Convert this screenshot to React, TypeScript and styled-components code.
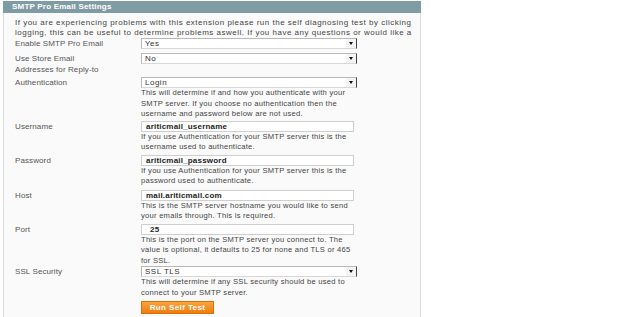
import React from "react";
import styled, { createGlobalStyle } from "styled-components";

const Global = createGlobalStyle`
  html, body { margin: 0; padding: 0; background: #ffffff; }
  body { font-family: "Liberation Sans", Arial, sans-serif; }
`;

const Panel = styled.div`
  width: 418px;
  margin: 1px 0 0 3px;
  overflow: hidden;
`;

const Header = styled.div`
  height: 12px;
  background: #7f9ca4;
  color: #ffffff;
  font-size: 8px;
  font-weight: bold;
  line-height: 12px;
  padding-left: 9px;
  letter-spacing: 0.2px;
`;

const Body = styled.div`
  background: #fafafa;
  border-left: 1px solid #dcdcdc;
  border-right: 1px solid #dcdcdc;
  padding: 5px 0 4px 11px;
  height: 304px;
  box-sizing: border-box;
`;

const Intro = styled.div`
  font-size: 8px;
  line-height: 9.5px;
  color: #444;
  white-space: nowrap;
  letter-spacing: 0.5px;
  margin-bottom: 1px;
`;

const Row = styled.div<{ $gap?: number }>`
  display: grid;
  grid-template-columns: 126px 216px;
  padding-bottom: ${(p) => p.$gap ?? 2}px;
`;

const Label = styled.div`
  font-size: 8px;
  line-height: 11px;
  color: #555;
  letter-spacing: 0.1px;
`;

const Value = styled.div`
  display: flex;
  flex-direction: column;
`;

const SelectBox = styled.div`
  position: relative;
  width: 216px;
  height: 11px;
  box-sizing: border-box;
  border: 1px solid #b8b8b8;
  border-right-color: #444;
  border-bottom-color: #d8d8d8;
  background: #ffffff;
  font-size: 8px;
  line-height: 9px;
  color: #333;
  padding-left: 3px;
  letter-spacing: 0.5px;
`;

const Arrow = styled.div`
  position: absolute;
  right: 0;
  top: 0;
  width: 10px;
  height: 9px;
  background: #f4f4f4;
  display: flex;
  align-items: center;
  justify-content: center;
  &::after {
    content: "";
    border-left: 2.5px solid transparent;
    border-right: 2.5px solid transparent;
    border-top: 3px solid #111;
  }
`;

const InputBox = styled.div<{ $indent?: number }>`
  width: 213px;
  height: 11px;
  box-sizing: border-box;
  border: 1px solid #cfcfcf;
  background: #ffffff;
  font-size: 8px;
  font-weight: bold;
  line-height: 9px;
  color: #222;
  letter-spacing: 0.2px;
  padding-left: ${(p) => p.$indent ?? 4}px;
`;

const Note = styled.div`
  font-size: 7.6px;
  line-height: 10.5px;
  color: #444;
  letter-spacing: 0.25px;
  width: 214px;
`;

const Button = styled.button`
  width: 73px;
  height: 13px;
  margin-top: 3px;
  padding: 0;
  border: 1px solid #dd6f00;
  background: linear-gradient(#f9a43e, #ef7d0f);
  color: #ffffff;
  font-family: "Liberation Sans", Arial, sans-serif;
  font-size: 8px;
  font-weight: bold;
  line-height: 11px;
  letter-spacing: 0.4px;
`;

const Select = ({ value }: { value: string }) => (
  <SelectBox>
    {value}
    <Arrow />
  </SelectBox>
);

export default function App() {
  return (
    <>
      <Global />
      <Panel>
        <Header>SMTP Pro Email Settings</Header>
        <Body>
          <Intro>
            If you are experiencing problems with this extension please run the self diagnosing test by clicking
            <br />
            logging, this can be useful to determine problems aswell. If you have any questions or would like a
          </Intro>
          <Row $gap={4}>
            <Label>Enable SMTP Pro Email</Label>
            <Value>
              <Select value="Yes" />
            </Value>
          </Row>
          <Row $gap={2}>
            <Label>
              Use Store Email
              <br />
              Addresses for Reply-to
            </Label>
            <Value>
              <Select value="No" />
            </Value>
          </Row>
          <Row $gap={1}>
            <Label>Authentication</Label>
            <Value>
              <Select value="Login" />
              <Note>
                This will determine if and how you authenticate with your SMTP server. If you choose no authentication then the username and password below are not used.
              </Note>
            </Value>
          </Row>
          <Row $gap={2}>
            <Label>Username</Label>
            <Value>
              <InputBox>ariticmail_username</InputBox>
              <Note>If you use Authentication for your SMTP server this is the username used to authenticate.</Note>
            </Value>
          </Row>
          <Row $gap={3}>
            <Label>Password</Label>
            <Value>
              <InputBox>ariticmail_password</InputBox>
              <Note>If you use Authentication for your SMTP server this is the password used to authenticate.</Note>
            </Value>
          </Row>
          <Row $gap={2}>
            <Label>Host</Label>
            <Value>
              <InputBox>mail.ariticmail.com</InputBox>
              <Note>This is the SMTP server hostname you would like to send your emails through. This is required.</Note>
            </Value>
          </Row>
          <Row $gap={0}>
            <Label>Port</Label>
            <Value>
              <InputBox $indent={8}>25</InputBox>
              <Note>This is the port on the SMTP server you connect to. The value is optional, it defaults to 25 for none and TLS or 465 for SSL.</Note>
            </Value>
          </Row>
          <Row $gap={1}>
            <Label>SSL Security</Label>
            <Value>
              <Select value="SSL TLS" />
              <Note>This will determine if any SSL security should be used to connect to your SMTP server.</Note>
              <Button>Run Self Test</Button>
            </Value>
          </Row>
        </Body>
      </Panel>
    </>
  );
}
